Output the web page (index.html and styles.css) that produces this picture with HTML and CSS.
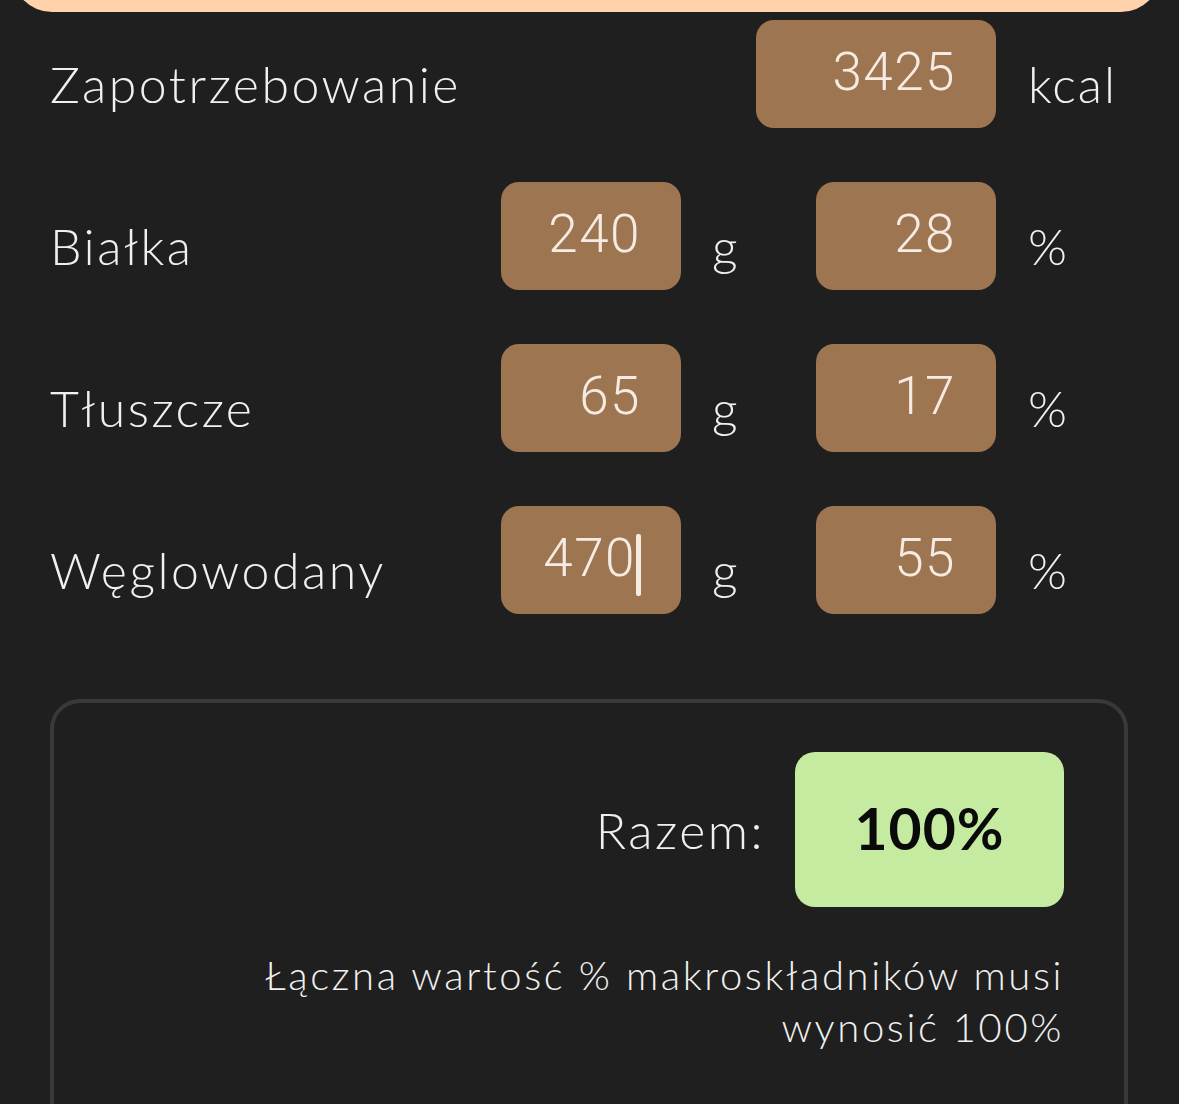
FILE: index.html
```html
<!DOCTYPE html>
<html>

	<head>
		<meta charset="UTF-8">
		<meta name="viewport" content="width=device-width, initial-scale=1.0">
		<title>Makroskładniki</title>
		<link rel="stylesheet" href="styles.css">
	</head>

	<body>
		<div id="wrap">
			<!--górna karta-->
			<div class="topCard"></div>

			<div class="rows">
				<div class="row">
					<span class="label">Zapotrzebowanie</span>
					<div class="field wide"><span>3425</span></div>
					<span class="unit last">kcal</span>
				</div>
				<div class="row">
					<span class="label">Białka</span>
					<div class="field"><span>240</span></div>
					<span class="unit">g</span>
					<div class="field"><span>28</span></div>
					<span class="unit last">%</span>
				</div>
				<div class="row">
					<span class="label">Tłuszcze</span>
					<div class="field"><span>65</span></div>
					<span class="unit">g</span>
					<div class="field"><span>17</span></div>
					<span class="unit last">%</span>
				</div>
				<div class="row">
					<span class="label">Węglowodany</span>
					<div class="field"><span>470</span><i class="caret"></i></div>
					<span class="unit">g</span>
					<div class="field"><span>55</span></div>
					<span class="unit last">%</span>
				</div>
			</div>

			<!--suma-->
			<div class="summary">
				<div class="total">
					<span class="totalLabel">Razem:</span>
					<div class="totalBox">100%</div>
				</div>
				<p class="note">Łączna wartość % makroskładników musi<br>wynosić 100%</p>
			</div>
		</div>
	</body>

</html>
```

FILE: styles.css
```css
* {
	margin: 0;
	padding: 0;
	box-sizing: border-box;
}

body,
html {
	height: 100%;
	background: #1f1f1f;
	overflow: hidden;
}

body {
	font-family: "Lato", "Noto Sans", sans-serif;
	font-weight: 300;
	color: #f0f0f0;
}

#wrap {
	width: 100%;
}

.topCard {
	height: 60px;
	margin: -48px 18px 0 12px;
	background: #ffd2ac;
	border-radius: 0 0 40px 40px;
}

.rows {
	display: flex;
	flex-direction: column;
	gap: 54px;
	padding: 8px 59px 0 50px;
}

.row {
	display: flex;
	align-items: center;
	height: 108px;
}

.label {
	flex: 1;
	font-size: 50px;
	letter-spacing: 2.5px;
	padding-top: 20px;
}

.field {
	width: 180px;
	height: 108px;
	background: #9d7551;
	border-radius: 18px;
	display: flex;
	align-items: center;
	justify-content: flex-end;
	padding: 0 40px 4px 0;
	font-family: "Roboto", sans-serif;
	font-weight: 300;
	font-size: 53px;
	color: #f5ebe2;
	letter-spacing: 1.5px;
}

.field.wide {
	width: 240px;
}

.caret {
	display: inline-block;
	width: 5px;
	height: 62px;
	margin: 14px 0 0 0;
	background: #f5ebe2;
	border-radius: 2px;
}

.unit {
	width: 135px;
	padding: 20px 0 0 31px;
	font-size: 50px;
	letter-spacing: 2px;
}

.unit.last {
	width: 124px;
	padding-left: 32px;
}

.summary {
	margin: 85px 51px 0 50px;
	height: 480px;
	border: 4px solid #393939;
	border-radius: 30px;
	padding: 49px 60px 0 0;
	display: flex;
	flex-direction: column;
	align-items: flex-end;
}

.total {
	display: flex;
	align-items: center;
	gap: 30px;
}

.totalLabel {
	font-size: 50px;
	letter-spacing: 2.5px;
}

.totalBox {
	width: 269px;
	height: 155px;
	background: #c5eba1;
	border-radius: 20px;
	display: flex;
	align-items: center;
	justify-content: center;
	color: #0a0a0a;
	font-size: 57px;
	font-weight: 700;
	letter-spacing: 1px;
	padding-bottom: 4px;
}

.note {
	margin-top: 42px;
	text-align: right;
	font-size: 40px;
	line-height: 52px;
	letter-spacing: 2.6px;
}
```
